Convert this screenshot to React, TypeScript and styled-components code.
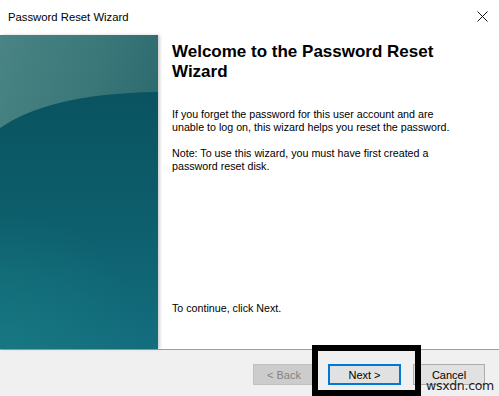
import React from "react";
import styled, { createGlobalStyle } from "styled-components";

const Global = createGlobalStyle`
  html, body { margin: 0; padding: 0; background: #ffffff; }
  body { width: 499px; height: 396px; overflow: hidden; }
`;

const Window = styled.div`
  position: relative;
  width: 499px;
  height: 396px;
  display: flex;
  flex-direction: column;
  background: #ffffff;
  font-family: "Liberation Sans", Arial, sans-serif;
  color: #000;
`;

const TitleBar = styled.div`
  height: 35px;
  flex: 0 0 35px;
  display: flex;
  align-items: center;
  justify-content: space-between;
  padding: 0 11px 0 8px;
  box-sizing: border-box;
`;

const Title = styled.span`
  font-size: 11.3px;
  color: #000;
  margin-top: -2px;
`;

const CloseBtn = styled.div`
  width: 12px;
  height: 12px;
  display: flex;
  align-items: center;
  justify-content: center;
  margin-top: -3px;
`;

const Main = styled.div`
  flex: 0 0 314px;
  display: flex;
`;

const SidePanel = styled.div`
  width: 158px;
  flex: 0 0 158px;
  height: 100%;
  box-shadow: 2px 0 3px rgba(0, 0, 0, 0.18);
  position: relative;
  z-index: 1;
  svg { display: block; }
`;

const Content = styled.div`
  flex: 1;
  display: flex;
  flex-direction: column;
  padding: 7px 20px 34px 14px;
`;

const Heading = styled.h1`
  margin: 0;
  font-size: 17px;
  line-height: 20px;
  font-weight: bold;
  width: 270px;
`;

const Para = styled.p<{ $gap?: number }>`
  margin: ${(p) => p.$gap ?? 0}px 0 0 0;
  font-size: 10.7px;
  line-height: 13px;
  width: 280px;
`;

const Bottom = styled(Para)`
  margin-top: auto;
`;

const Footer = styled.div`
  flex: 1;
  background: #f0f0f0;
  border-top: 1px solid #a0a0a0;
  display: flex;
  align-items: flex-start;
  padding: 14px 14px 0 253px;
  box-sizing: border-box;
`;

const Button = styled.button<{ $w: number; $gap: number; $variant?: "disabled" | "default" | "normal" }>`
  width: ${(p) => p.$w}px;
  height: 21px;
  margin-left: ${(p) => p.$gap}px;
  box-sizing: border-box;
  font-family: "Liberation Sans", Arial, sans-serif;
  font-size: 11px;
  padding: 0;
  background: ${(p) => (p.$variant === "disabled" ? "#cccccc" : "#e1e1e1")};
  color: ${(p) => (p.$variant === "disabled" ? "#838383" : "#000")};
  border: ${(p) =>
    p.$variant === "default"
      ? "2px solid #0078d7"
      : p.$variant === "disabled"
      ? "1px solid #bfbfbf"
      : "1px solid #adadad"};
`;

const Highlight = styled.div`
  position: absolute;
  left: 312px;
  top: 345px;
  width: 109px;
  height: 51px;
  box-sizing: border-box;
  border: 6px solid #000;
  pointer-events: none;
`;

const Watermark = styled.span`
  position: absolute;
  left: 426px;
  top: 378px;
  font-family: "DejaVu Sans", sans-serif;
  font-size: 12.5px;
  color: #222;
  letter-spacing: -0.3px;
`;

function Banner() {
  return (
    <svg width="158" height="314" viewBox="0 0 158 314" preserveAspectRatio="none">
      <defs>
        <linearGradient id="topg" x1="0" y1="0" x2="1" y2="0.6">
          <stop offset="0" stopColor="#4a8484" />
          <stop offset="0.5" stopColor="#3a7779" />
          <stop offset="1" stopColor="#266469" />
        </linearGradient>
        <linearGradient id="lowg" x1="0" y1="0" x2="0" y2="1">
          <stop offset="0" stopColor="#0a5360" />
          <stop offset="0.45" stopColor="#0d5d6b" />
          <stop offset="1" stopColor="#136e7e" />
        </linearGradient>
        <radialGradient id="glow" cx="0" cy="1" r="0.9" gradientUnits="objectBoundingBox">
          <stop offset="0" stopColor="#1a8085" stopOpacity="0.55" />
          <stop offset="1" stopColor="#1a8085" stopOpacity="0" />
        </radialGradient>
      </defs>
      <rect x="0" y="0" width="158" height="314" fill="url(#topg)" />
      <path d="M0,93 C30,72 80,58 158,57 L158,314 L0,314 Z" fill="url(#lowg)" />
      <rect x="0" y="160" width="158" height="154" fill="url(#glow)" />
    </svg>
  );
}

export default function App() {
  return (
    <>
      <Global />
      <Window>
        <TitleBar>
          <Title>Password Reset Wizard</Title>
          <CloseBtn>
            <svg width="11" height="11" viewBox="0 0 11 11">
              <path d="M0.5,0.5 L10.5,10.5 M10.5,0.5 L0.5,10.5" stroke="#111" strokeWidth="1" fill="none" />
            </svg>
          </CloseBtn>
        </TitleBar>
        <Main>
          <SidePanel>
            <Banner />
          </SidePanel>
          <Content>
            <Heading>Welcome to the Password Reset Wizard</Heading>
            <Para $gap={26}>
              If you forget the password for this user account and are unable to log on, this wizard helps you reset the password.
            </Para>
            <Para $gap={13}>
              Note: To use this wizard, you must have first created a password reset disk.
            </Para>
            <Bottom>To continue, click Next.</Bottom>
          </Content>
        </Main>
        <Footer>
          <Button $w={62} $gap={0} $variant="disabled" disabled>
            &lt; Back
          </Button>
          <Button $w={73} $gap={13} $variant="default">
            Next &gt;
          </Button>
          <Button $w={72} $gap={12} $variant="normal">
            Cancel
          </Button>
        </Footer>
        <Highlight />
        <Watermark>wsxdn.com</Watermark>
      </Window>
    </>
  );
}
